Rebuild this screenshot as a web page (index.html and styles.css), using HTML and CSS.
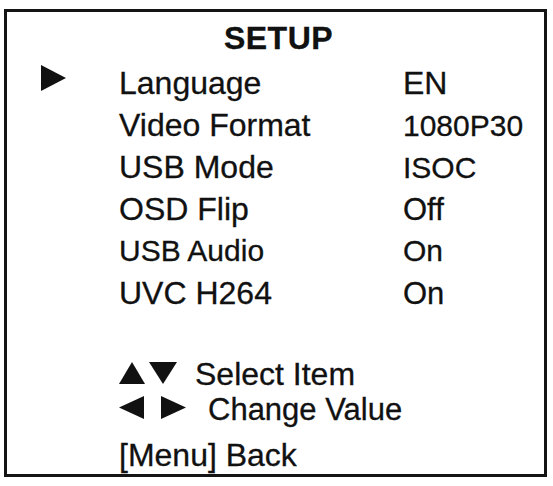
FILE: index.html
```html
<!DOCTYPE html>
<html>
<head>
<meta charset="utf-8">
<link rel="stylesheet" href="styles.css">
</head>
<body>
<div class="osd">
  <div class="title">SETUP</div>
  <div class="menu">
    <div class="cursor"><svg width="25" height="26" viewBox="0 0 25 26"><polygon points="0,0 25,13 0,26" fill="#111"/></svg></div>
    <div class="label">Language</div>
    <div class="value">EN</div>

    <div></div>
    <div class="label">Video Format</div>
    <div class="value sm">1080P30</div>

    <div></div>
    <div class="label">USB Mode</div>
    <div class="value sm">ISOC</div>

    <div></div>
    <div class="label">OSD Flip</div>
    <div class="value md">Off</div>

    <div></div>
    <div class="label sm">USB Audio</div>
    <div class="value sm">On</div>

    <div></div>
    <div class="label">UVC H264</div>
    <div class="value md">On</div>
  </div>
  <div class="help">
    <div class="help-line"><svg class="keys" width="58" height="22" viewBox="0 0 58 22"><polygon points="0,22 13,0 26,22" fill="#111"/><polygon points="30,0 58,0 44,22" fill="#111"/></svg><span class="gap-a">Select Item</span></div>
    <div class="help-line md"><svg class="keys" width="67" height="23" viewBox="0 0 67 23"><polygon points="0,11.5 25,0 25,23" fill="#111"/><polygon points="42,0 67,11.5 42,23" fill="#111"/></svg><span class="gap-b">Change Value</span></div>
    <div class="help-line back">[Menu] Back</div>
  </div>
</div>
</body>
</html>
```
FILE: styles.css
```css
html, body {
  margin: 0;
  padding: 0;
  background: #ffffff;
}

body {
  font-family: "Liberation Sans", Arial, sans-serif;
  color: #111111;
  -webkit-text-stroke: 0.3px #111111;
}

.osd {
  box-sizing: border-box;
  margin: 9px 0 0 4px;
  width: 543px;
  height: 468px;
  border: 3px solid #141414;
  padding: 6px 0 0 34px;
}

.title {
  font-weight: bold;
  font-size: 32px;
  letter-spacing: 0.5px;
  line-height: 40px;
  text-align: center;
  margin-left: -28px;
}

.menu {
  display: grid;
  grid-template-columns: 78px 284px auto;
  grid-auto-rows: 42px;
  align-items: baseline;
  margin-top: 4px;
  font-size: 32px;
  line-height: 42px;
}

.cursor {
  align-self: start;
  padding-top: 3px;
  line-height: 0;
}

.cursor svg {
  display: block;
}

.sm { font-size: 30px; }
.md { font-size: 31px; }

.help {
  margin: 43px 0 0 78px;
  font-size: 32px;
}

.help-line {
  line-height: 35px;
  white-space: nowrap;
}

.help-line.md {
  font-size: 31px;
}

.keys {
  vertical-align: 1px;
}

.gap-a {
  margin-left: 18px;
}

.gap-b {
  margin-left: 22px;
}

.back {
  margin-top: 11px;
}
```
